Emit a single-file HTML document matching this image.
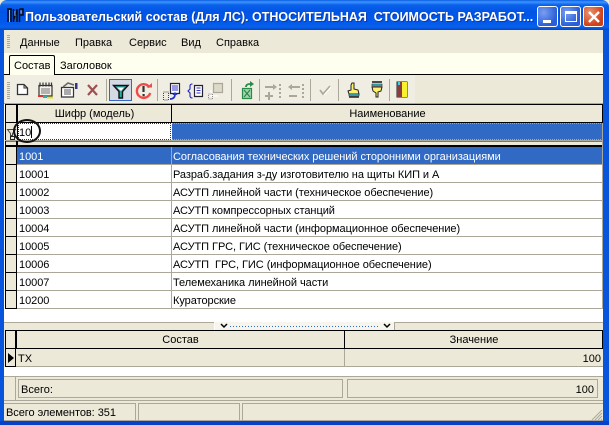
<!DOCTYPE html>
<html><head><meta charset="utf-8"><style>
*{margin:0;padding:0;box-sizing:border-box}
html,body{width:609px;height:425px;overflow:hidden;background:#ece9d8}
body{position:relative;font:11px "Liberation Sans","DejaVu Sans",sans-serif;color:#000}
.a{position:absolute}
.t{position:absolute;white-space:pre;line-height:13px}
.r{position:absolute;left:5px;width:598px;height:18px;border-bottom:1px solid #aca899}
.r i{position:absolute;left:0;top:0;width:12px;height:18px;background:#ece9d8;border:1px solid #000;border-top:0}
.r b{position:absolute;left:166px;top:0;width:1px;height:17px;background:#aca899}
.r span{position:absolute;top:4px;white-space:pre;line-height:13px;font-weight:normal;letter-spacing:-.05px}
.c1{left:14px}.c2{left:168px}
.sep{position:absolute;top:79px;width:1px;height:22px;background:#aca899}
svg{position:absolute;overflow:visible}
</style></head><body>
<div class="a" style="left:0;top:0;width:609px;height:30px;border-radius:7px 7px 0 0;background:linear-gradient(180deg,#0a5be0 0,#3d95ff 2px,#0a60ea 5px,#0055e5 12px,#0058ee 22px,#0a61e8 27px,#0043cf 30px)"></div>
<div class="a" style="left:0;top:30px;width:4px;height:395px;background:#0855dd"></div>
<div class="a" style="left:603px;top:30px;width:6px;height:395px;background:#0855dd"></div>
<div class="a" style="left:0;top:421px;width:609px;height:4px;background:#0841c8"></div>
<svg style="left:7px;top:8px" width="16" height="15"><path d="M1 1v13M4 1v13M0 1h5M6.500 14V1M10 1v13M6.500 12L10 2M12.500 14V1M12.500 1H16V7H12.500" fill="none" stroke="#0a0a14" stroke-width="1.500"/><path d="M2.500 2v12M8 3v5M14 2.500v3" stroke="#dce8ff" stroke-width=".7"/></svg>
<div class="t" style="left:25px;top:9px;font-size:12.5px;font-weight:bold;color:#fff;line-height:16px;text-shadow:1px 1px 0 #0a3aa8;width:510px;overflow:hidden">Пользовательский состав (Для ЛС). ОТНОСИТЕЛЬНАЯ  СТОИМОСТЬ РАЗРАБОТ...</div>
<div class="a" style="left:537px;top:6px;width:21px;height:21px;border:1px solid #fff;border-radius:3px;background:radial-gradient(circle at 30% 30%,#7a9ff0,#2a5ed8 70%)"><div class="a" style="left:5px;top:13px;width:8px;height:3px;background:#fff"></div></div>
<div class="a" style="left:560px;top:6px;width:21px;height:21px;border:1px solid #fff;border-radius:3px;background:radial-gradient(circle at 30% 30%,#7a9ff0,#2a5ed8 70%)"><div class="a" style="left:4px;top:4px;width:12px;height:11px;border:1px solid #fff;border-top-width:3px"></div></div>
<div class="a" style="left:583px;top:6px;width:21px;height:21px;border:1px solid #fff;border-radius:3px;background:radial-gradient(circle at 30% 30%,#e9946f,#cf3f18 70%)"><svg style="left:4px;top:4px" width="12" height="12"><path d="M1 1l10 10M11 1L1 11" stroke="#fff" stroke-width="2.400"/></svg></div>

<div class="a" style="left:7px;top:35px;width:3px;height:14px;background:repeating-linear-gradient(180deg,#aca899 0 1px,#ece9d8 1px 2px)"></div>
<div class="t" style="left:20px;top:37px">Данные</div>
<div class="t" style="left:75px;top:37px">Правка</div>
<div class="t" style="left:129px;top:37px">Сервис</div>
<div class="t" style="left:181px;top:37px">Вид</div>
<div class="t" style="left:216px;top:37px">Справка</div>

<div class="a" style="left:4px;top:53px;width:599px;height:21px;background:#fffff0"></div>
<div class="a" style="left:4px;top:74px;width:599px;height:1px;background:#000"></div>
<div class="a" style="left:9px;top:55px;width:46px;height:20px;background:#fffff0;border:1px solid #000;border-bottom:0;border-radius:2px 2px 0 0"></div>
<div class="t" style="left:14px;top:60px">Состав</div>
<div class="t" style="left:60px;top:60px">Заголовок</div>

<div class="a" style="left:5px;top:75px;width:410px;height:28px;background:#f0eee2"></div>
<div class="a" style="left:7px;top:82px;width:3px;height:17px;background:repeating-linear-gradient(180deg,#aca899 0 1px,#ece9d8 1px 2px)"></div>
<svg style="left:16px;top:83px" width="14" height="14"><path d="M1.500 1.500h6.500l3.500 3.500v6.500h-10z" fill="#fff" stroke="#333" stroke-width="1.300"/><path d="M8 1.500v3.500h3.500" fill="none" stroke="#333"/></svg>
<svg style="left:37px;top:82px" width="18" height="17"><path d="M2 3.500h13v10.500h-13z" fill="#f4f2ea" stroke="#333" stroke-width="1.200"/><path d="M3 .500v4M6 .500v4M9 .500v4M12 .500v4M14.500 .500v4" stroke="#333" stroke-width="1.200"/><path d="M4 7h9M4 9h9M4 11h9" stroke="#777"/><path d="M1 14h5" stroke="#d33" stroke-width="2"/><path d="M6 15h4" stroke="#3aa" stroke-width="2"/><path d="M10 15.500h6" stroke="#dd3" stroke-width="2"/></svg>
<svg style="left:60px;top:82px" width="18" height="16"><path d="M1.500 5.500h12v9.500h-12z" fill="#fff" stroke="#333" stroke-width="1.200"/><path d="M4 8h7M4 10h7M4 12h7" stroke="#555"/><path d="M3 5l5-4 6 2" fill="none" stroke="#666" stroke-width="1.500"/><path d="M15 1h2.500v6H15z" fill="#338"/></svg>
<svg style="left:87px;top:84px" width="12" height="12"><path d="M1 1l9 10M10 1L1 11" stroke="#a05050" stroke-width="2.200"/></svg>
<div class="sep" style="left:106px"></div>
<div class="a" style="left:109px;top:79px;width:23px;height:22px;background:#d5d9e4;border:1px solid #316ac5"></div>
<svg style="left:113px;top:85px" width="16" height="14"><path d="M.5.500h14.500l-5.500 6v6.500h-3.500v-6.500z" fill="#24a8a8" stroke="#111" stroke-width="1.400"/><path d="M4 2.500h7l-3 3.500z" fill="#fff"/></svg>
<svg style="left:135px;top:82px" width="18" height="18"><path d="M14.500 5.500A6.800 6.800 0 1 0 15.200 11" fill="none" stroke="#ef4b4b" stroke-width="2.400"/><path d="M11.500 5.500h5.500V1z" fill="#ef4b4b"/><path d="M8.500 4v6" stroke="#333" stroke-width="2.200"/><path d="M7.500 12h2.200v2.200H7.500z" fill="#333"/></svg>
<div class="sep" style="left:157px"></div>
<svg style="left:163px;top:83px" width="18" height="18"><path d="M7.500.500h9v10h-9z" fill="#fff" stroke="#223" stroke-width="1.200"/><path d="M9 3h6M9 5h6M9 7h6" stroke="#33c"/><path d="M.5 9h5v8h-5z" fill="none" stroke="#444" stroke-dasharray="1 1"/><path d="M7 16q5 0 5-5" fill="none" stroke="#23c" stroke-width="1.700"/><path d="M9.500 12h5l-2.500-3z" fill="#23c"/></svg>
<svg style="left:188px;top:83px" width="16" height="16"><path d="M6.500 2.500h8v11h-8z" fill="#fff" stroke="#223" stroke-width="1.200"/><path d="M8.500 5h4M8.500 7.500h4M8.500 10h4" stroke="#33c"/><path d="M4.500 1q-2.500 0-2.500 2v3l-2 2 2 2v3q0 2 2.500 2" fill="none" stroke="#22c" stroke-width="1.100"/></svg>
<svg style="left:208px;top:82px" width="18" height="18"><path d="M5.500 1.500h9v9h-9z" fill="#dcd9c9" stroke="#aca899" stroke-width="1.200"/><path d="M3 8v6h7" fill="none" stroke="#fff" stroke-width="1.200"/><path d="M.5 12h4v5h-4z" fill="none" stroke="#888" stroke-dasharray="1 1"/></svg>
<div class="sep" style="left:231px"></div>
<svg style="left:240px;top:81px" width="16" height="18"><path d="M2.500 7.500h9v10h-9z" fill="#9fd6a8" stroke="#2a8a4a" stroke-width="1.200"/><path d="M4 9l6 7M10 9l-6 7" stroke="#2a7a4a"/><path d="M6 6q0-3 4-3" fill="none" stroke="#2a8a4a" stroke-width="1.800"/><path d="M10 0l4 3-4 3z" fill="#2a8a4a"/></svg>
<div class="sep" style="left:259px"></div>
<svg style="left:265px;top:83px" width="18" height="16" fill="#aca899"><path d="M0 3h8V1l4 3-4 3V5H0zM0 12h8v2H0zM3 9h2v8H3zM14 1h2v2h-2zM14 5h2v2h-2zM14 9h2v2h-2zM14 13h2v2h-2z"/></svg>
<svg style="left:288px;top:83px" width="18" height="16" fill="#aca899"><path d="M12 3H4V1L0 4l4 3V5h8zM1 12h8v2H1zM14 1h2v2h-2zM14 5h2v2h-2zM14 9h2v2h-2zM14 13h2v2h-2z"/></svg>
<div class="sep" style="left:310px"></div>
<svg style="left:318px;top:84px" width="14" height="13"><path d="M2 6l3 4 7-8" fill="none" stroke="#aca899" stroke-width="1.700"/><path d="M6 11l7-8" stroke="#fff"/></svg>
<div class="sep" style="left:338px"></div>
<svg style="left:347px;top:82px" width="14" height="16"><path d="M5 1h2v6l4 1 1 4H2L1 9l3-1V3z" fill="#fff070" stroke="#222"/><path d="M2 12h10v2H2z" fill="#40c0d0" stroke="#222" stroke-width=".6"/><path d="M2 15h10" stroke="#222" stroke-width="1.500"/></svg>
<svg style="left:370px;top:81px" width="14" height="17"><path d="M2 1h10" stroke="#222" stroke-width="1.600"/><path d="M2 3h10v2H2z" fill="#40c0d0" stroke="#222" stroke-width=".6"/><path d="M2 6h10l-1 4-3 1v5H6v-4L3 10z" fill="#fff070" stroke="#222"/></svg>
<div class="sep" style="left:389px"></div>
<svg style="left:396px;top:81px" width="14" height="18"><path d="M.5.500h11v16H.5z" fill="#222"/><path d="M1 1h5v15H1z" fill="#8c3c3c"/><path d="M6 1h5v15H6z" fill="#f8f030"/><path d="M2 1h2v3H2z" fill="#40d0e0"/></svg>
<div class="a" style="left:4px;top:103px;width:599px;height:1px;background:#aca899"></div>

<div class="a" style="left:4px;top:104px;width:599px;height:218px;background:#fff"></div>
<div class="a" style="left:5px;top:104px;width:598px;height:19px;background:#ece9d8;border-top:1px solid #000;border-bottom:1px solid #000;border-left:1px solid #000"></div>
<div class="a" style="left:16px;top:104px;width:2px;height:43px;background:#000"></div>
<div class="a" style="left:171px;top:104px;width:1px;height:19px;background:#000"></div>
<div class="t" style="left:18px;top:108px;width:153px;text-align:center">Шифр (модель)</div>
<div class="t" style="left:172px;top:108px;width:431px;text-align:center">Наименование</div>
<div class="a" style="left:5px;top:123px;width:12px;height:18px;background:#ece9d8;border-left:1px solid #000"></div>
<svg style="left:7px;top:129px" width="10" height="11"><path d="M.5.500h8l-3 4v2h-2v-2z" fill="none" stroke="#444"/><path d="M3.500 7.500h4v3h-4z" fill="none" stroke="#222"/></svg>
<div class="a" style="left:18px;top:123px;width:153px;height:17px;background:#fff;border:1px dotted #333"></div>
<div class="a" style="left:172px;top:123px;width:431px;height:17px;background:#316ac5;border:1px dotted #d9a040;border-left:0"></div>
<div class="t" style="left:19px;top:127px">10</div>
<div class="a" style="left:31px;top:126px;width:1px;height:12px;background:#000"></div>
<div class="a" style="left:5px;top:140px;width:598px;height:1px;background:#aca899"></div>
<div class="a" style="left:5px;top:141px;width:598px;height:6px;background:#ece9d8;border-top:1px solid #777;border-bottom:2px solid #000"></div>
<div class="a" style="left:5px;top:141px;width:1px;height:6px;background:#000"></div>
<div class="a" style="left:16px;top:141px;width:2px;height:6px;background:#000"></div>
<div class="a" style="left:13px;top:119px;width:28px;height:24px;border:2px solid #111;border-radius:50%"></div>

<div class="r" style="top:147px;background:#316ac5;color:#fff"><i></i><b></b><span class="c1">1001</span><span class="c2">Согласования технических решений сторонними организациями</span></div>
<div class="r" style="top:165px"><i></i><b></b><span class="c1">10001</span><span class="c2">Разраб.задания з-ду изготовителю на щиты КИП и А</span></div>
<div class="r" style="top:183px"><i></i><b></b><span class="c1">10002</span><span class="c2">АСУТП линейной части (техническое обеспечение)</span></div>
<div class="r" style="top:201px"><i></i><b></b><span class="c1">10003</span><span class="c2">АСУТП компрессорных станций</span></div>
<div class="r" style="top:219px"><i></i><b></b><span class="c1">10004</span><span class="c2">АСУТП линейной части (информационное обеспечение)</span></div>
<div class="r" style="top:237px"><i></i><b></b><span class="c1">10005</span><span class="c2">АСУТП ГРС, ГИС (техническое обеспечение)</span></div>
<div class="r" style="top:255px"><i></i><b></b><span class="c1">10006</span><span class="c2">АСУТП  ГРС, ГИС (информационное обеспечение)</span></div>
<div class="r" style="top:273px"><i></i><b></b><span class="c1">10007</span><span class="c2">Телемеханика линейной части</span></div>
<div class="r" style="top:291px"><i></i><b></b><span class="c1">10200</span><span class="c2">Кураторские</span></div>
<div class="a" style="left:602px;top:104px;width:1px;height:205px;background:#aca899"></div>
<div class="a" style="left:602px;top:104px;width:1px;height:19px;background:#000"></div>

<div class="a" style="left:4px;top:322px;width:599px;height:8px;background:#ece9d8;border-top:1px solid #aca899"></div>
<div class="a" style="left:214px;top:322px;width:181px;height:8px;background:#f6f5ee;border-right:1px solid #aca899;border-left:1px solid #fff"></div>
<div class="a" style="left:230px;top:326px;width:150px;height:1px;background:repeating-linear-gradient(90deg,#316ac5 0 1px,transparent 1px 3px)"></div>
<svg style="left:220px;top:323px" width="8" height="5"><path d="M1 1l3 3 3-3" fill="none" stroke="#000" stroke-width="1.500"/></svg>
<svg style="left:383px;top:323px" width="8" height="5"><path d="M1 1l3 3 3-3" fill="none" stroke="#000" stroke-width="1.500"/></svg>

<div class="a" style="left:5px;top:330px;width:598px;height:19px;background:#ece9d8;border:1px solid #000"></div>
<div class="a" style="left:15px;top:330px;width:2px;height:19px;background:#000"></div>
<div class="a" style="left:344px;top:330px;width:1px;height:19px;background:#000"></div>
<div class="t" style="left:17px;top:334px;width:327px;text-align:center">Состав</div>
<div class="t" style="left:345px;top:334px;width:258px;text-align:center">Значение</div>
<div class="a" style="left:5px;top:349px;width:598px;height:18px;background:#ece9d8;border-bottom:1px solid #aca899"></div>
<div class="a" style="left:5px;top:349px;width:11px;height:18px;border:1px solid #000;border-top:0"></div>
<svg style="left:8px;top:353px" width="6" height="10"><path d="M0 0l6 5-6 5z" fill="#000"/></svg>
<div class="a" style="left:344px;top:349px;width:1px;height:17px;background:#aca899"></div>
<div class="t" style="left:18px;top:353px">ТХ</div>
<div class="t" style="left:345px;top:353px;width:256px;text-align:right">100</div>
<div class="a" style="left:4px;top:367px;width:599px;height:9px;background:#fff"></div>

<div class="a" style="left:4px;top:376px;width:599px;height:25px;background:#ece9d8;border-top:1px solid #aca899;border-bottom:1px solid #aca899"></div>
<div class="a" style="left:15px;top:376px;width:1px;height:25px;background:#aca899"></div>
<div class="a" style="left:18px;top:379px;width:325px;height:19px;border:1px solid #aca899"></div>
<div class="a" style="left:347px;top:379px;width:251px;height:19px;border:1px solid #aca899"></div>
<div class="t" style="left:21px;top:384px">Всего:</div>
<div class="t" style="left:350px;top:384px;width:244px;text-align:right">100</div>

<div class="a" style="left:4px;top:403px;width:599px;height:18px;background:#ece9d8;border-bottom:1px solid #aca899"></div>
<div class="a" style="left:4px;top:403px;width:132px;height:18px;border:1px solid #aca899;border-left:0"></div>
<div class="a" style="left:138px;top:403px;width:102px;height:18px;border:1px solid #aca899"></div>
<div class="a" style="left:242px;top:403px;width:361px;height:1px;background:#aca899"></div>
<div class="a" style="left:242px;top:403px;width:1px;height:18px;background:#aca899"></div>
<div class="t" style="left:6px;top:407px;letter-spacing:-.05px">Всего элементов: 351</div>
<svg style="left:591px;top:409px" width="12" height="12"><path d="M11 1L1 11M11 4l-7 7M11 7l-4 4M11 10l-1 1" stroke="#aca899"/></svg>
</body></html>
